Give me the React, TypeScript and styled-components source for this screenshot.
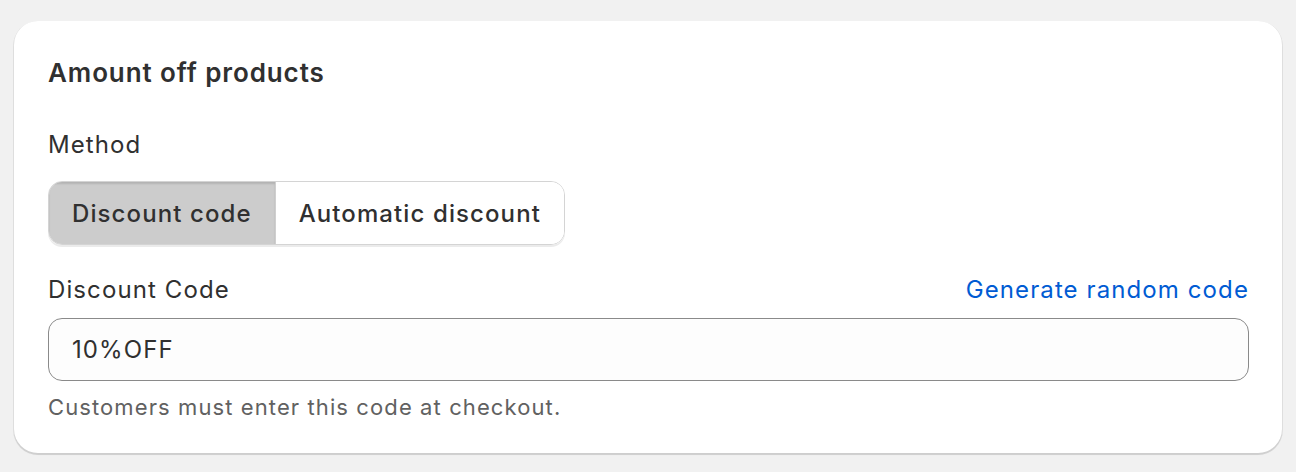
import React, { useState } from "react";
import styled, { createGlobalStyle } from "styled-components";

const GlobalStyle = createGlobalStyle`
  * { box-sizing: border-box; }
  body {
    margin: 0;
    background: #f1f1f1;
    font-family: Inter, "Noto Sans", sans-serif;
    color: #303030;
  }
`;

const Page = styled.div`
  padding: 21px 14px 18px;
`;

const Card = styled.section`
  background: #ffffff;
  border-radius: 24px;
  box-shadow: 0 1px 0 1px rgba(0, 0, 0, 0.07), 0 2px 1px rgba(0, 0, 0, 0.08);
  padding: 36px 33px 30px 34px;
  display: flex;
  flex-direction: column;
`;

const Title = styled.h2`
  margin: 0 0 40px;
  font-size: 26px;
  line-height: 32px;
  font-weight: 620;
  letter-spacing: 0.9px;
  color: #303030;
`;

const Label = styled.div`
  font-size: 24px;
  line-height: 32px;
  letter-spacing: 1.1px;
  color: #303030;
`;

const Segmented = styled.div`
  display: inline-flex;
  align-self: flex-start;
  margin: 20px 0 29px;
  border: 1.5px solid #d4d4d4;
  border-radius: 14px;
  overflow: hidden;
  box-shadow: 0 2px 0 rgba(0, 0, 0, 0.08);
`;

const Segment = styled.button<{ $active?: boolean }>`
  height: 62px;
  padding: 0 23px;
  border: none;
  border-right: 1.5px solid #cfcfcf;
  background: ${(p) => (p.$active ? "#cccccc" : "#ffffff")};
  box-shadow: ${(p) => (p.$active ? "inset 0 2px 2px rgba(0,0,0,0.12)" : "none")};
  font-family: inherit;
  font-size: 24px;
  font-weight: 550;
  letter-spacing: 1.1px;
  color: #303030;
  cursor: pointer;
  &:last-child { border-right: none; }
`;

const FieldHead = styled.div`
  display: flex;
  justify-content: space-between;
  align-items: center;
  margin-bottom: 12px;
`;

const Link = styled.a`
  font-size: 24px;
  line-height: 32px;
  letter-spacing: 1.1px;
  color: #005bd3;
  text-decoration: none;
  cursor: pointer;
`;

const Input = styled.input`
  height: 63px;
  width: 100%;
  border: 1.5px solid #8a8a8a;
  border-radius: 14px;
  background: #fdfdfd;
  padding: 0 23px;
  font-family: inherit;
  font-size: 24px;
  letter-spacing: 1.1px;
  color: #303030;
  outline: none;
`;

const Help = styled.p`
  margin: 10px 0 0;
  font-size: 22px;
  line-height: 32px;
  letter-spacing: 1.1px;
  color: #616161;
`;

export default function App() {
  const [method, setMethod] = useState<"code" | "auto">("code");
  return (
    <Page>
      <GlobalStyle />
      <Card>
        <Title>Amount off products</Title>
        <Label>Method</Label>
        <Segmented>
          <Segment $active={method === "code"} onClick={() => setMethod("code")}>
            Discount code
          </Segment>
          <Segment $active={method === "auto"} onClick={() => setMethod("auto")}>
            Automatic discount
          </Segment>
        </Segmented>
        <FieldHead>
          <Label>Discount Code</Label>
          <Link>Generate random code</Link>
        </FieldHead>
        <Input defaultValue="10%OFF" />
        <Help>Customers must enter this code at checkout.</Help>
      </Card>
    </Page>
  );
}
